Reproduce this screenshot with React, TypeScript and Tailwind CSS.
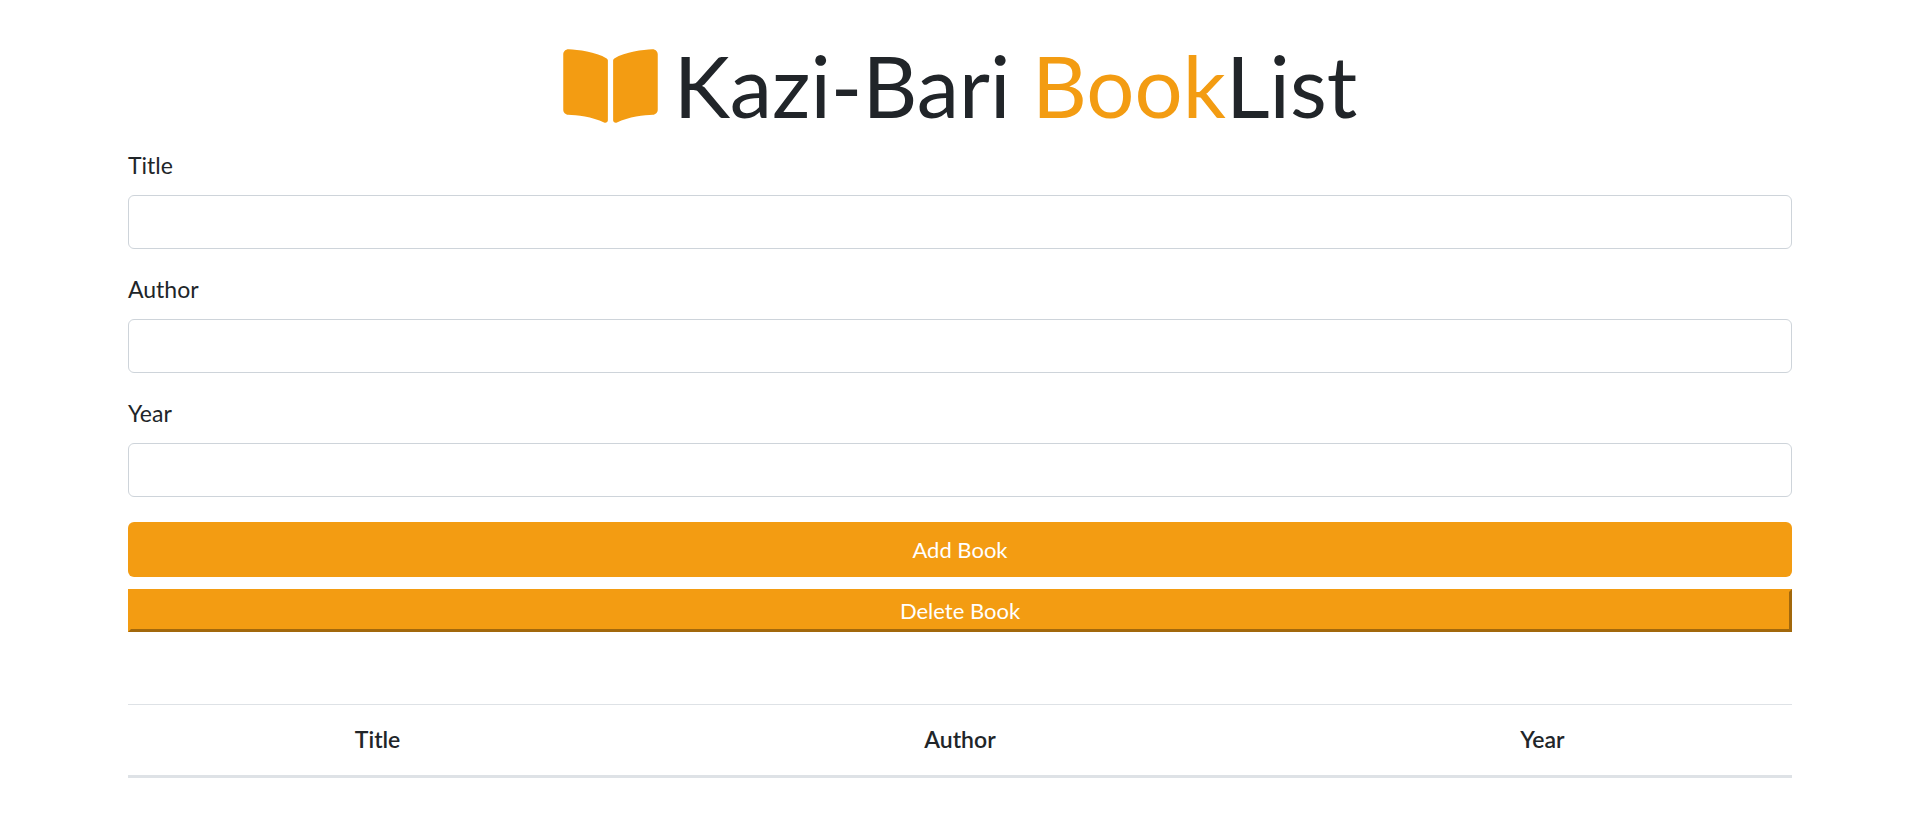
import { useState } from "react";
import { FaBookOpen } from "react-icons/fa";

type Book = { title: string; author: string; year: string };

const fields: { key: keyof Book; label: string; column: string }[] = [
  { key: "title", label: "Title", column: "w-[30%]" },
  { key: "author", label: "Author", column: "w-[40%]" },
  { key: "year", label: "Year", column: "w-[30%]" },
];

const emptyBook: Book = { title: "", author: "", year: "" };

export default function App() {
  const [draft, setDraft] = useState<Book>(emptyBook);
  const [books, setBooks] = useState<Book[]>([]);

  return (
    <main className="mx-auto w-full max-w-[1664px] bg-white pt-9 font-['Lato',sans-serif] text-[23px] leading-8 text-[#212529]">
      <h1 className="mb-[14px] text-center text-[85px] leading-[99px] font-normal">
        <FaBookOpen aria-hidden="true" className="mr-4 inline-block h-[84px] w-[95px] align-[-10px] text-[#f39c12]" />
        Kazi-Bari <span className="text-[#f39c12]">Book</span>List
      </h1>

      <form
        onSubmit={(e) => {
          e.preventDefault();
          setBooks([...books, draft]);
          setDraft(emptyBook);
        }}
      >
        <div className="flex flex-col gap-6">
          {fields.map(({ key, label }) => (
            <div key={key} className="flex flex-col items-start gap-[14px]">
              <label htmlFor={key}>{label}</label>
              <input
                id={key}
                type="text"
                value={draft[key]}
                onChange={(e) => setDraft({ ...draft, [key]: e.target.value })}
                className="h-[54px] w-full rounded-md border border-[#ced4da] bg-white px-4 outline-none focus:border-[#f39c12]"
              />
            </div>
          ))}
        </div>
        <button
          type="submit"
          className="mt-[25px] block h-[55px] w-full rounded-md bg-[#f39c12] text-center text-[22px] text-white"
        >
          Add Book
        </button>
        <button
          type="button"
          onClick={() => setBooks(books.slice(0, -1))}
          className="mt-3 block h-[43px] w-full border-[3px] border-t-[#f39c12] border-r-[#a2680c] border-b-[#a2680c] border-l-[#f39c12] bg-[#f39c12] text-center text-[22px] text-white"
        >
          Delete Book
        </button>
      </form>

      <table className="mt-[72px] w-full border-separate border-spacing-0 text-center">
        <thead>
          <tr>
            {fields.map(({ key, label, column }) => (
              <th
                key={key}
                scope="col"
                className={`${column} border-t border-b-[3px] border-[#dee2e6] px-[18px] pt-[18px] pb-5 font-semibold`}
              >
                {label}
              </th>
            ))}
          </tr>
        </thead>
        <tbody>
          {books.map((book, i) => (
            <tr key={i}>
              {fields.map(({ key }) => (
                <td key={key} className="border-b border-[#dee2e6] p-[18px]">
                  {book[key]}
                </td>
              ))}
            </tr>
          ))}
        </tbody>
      </table>
    </main>
  );
}
